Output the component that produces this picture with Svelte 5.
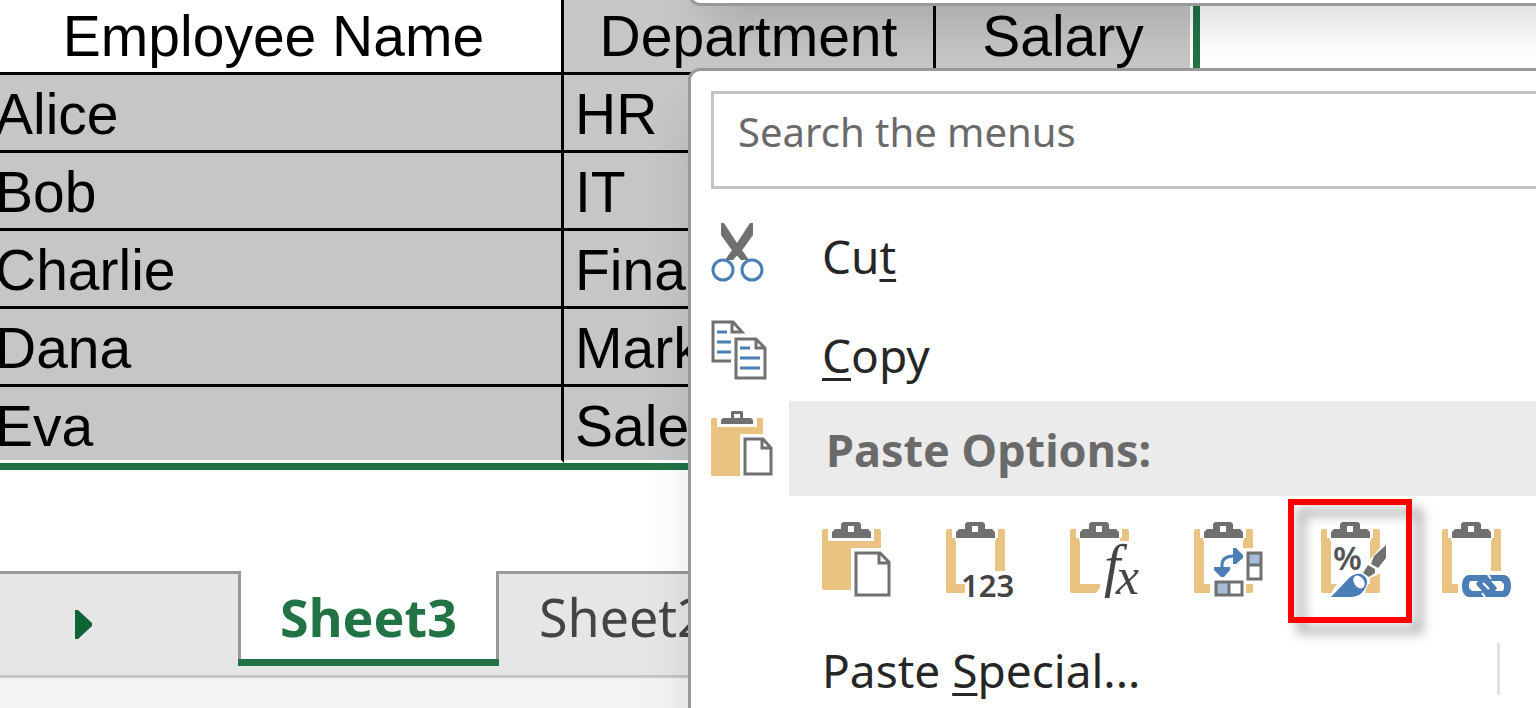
<script>
  const rows = [
    ['Alice', 'HR', ''],
    ['Bob', 'IT', ''],
    ['Charlie', 'Finance', ''],
    ['Dana', 'Marketing', ''],
    ['Eva', 'Sales', '']
  ];

  // right and bottom edges of the board frame differ where a badge covers it
  const options = [
    { id: 'paste', label: 'Paste' },
    { id: 'values', label: 'Values', frame: 'M1 7H10V62H19V71H1L0 69V9ZM49 7H58L59 9V49H49Z' },
    { id: 'formulas', label: 'Formulas', frame: 'M1 7H10V62H30V66L26 71H1L0 69V9ZM49 7H58L59 9V19H49Z' },
    { id: 'transpose', label: 'Transpose', frame: 'M1 7H10V62H16V71H1L0 69V9ZM49 7H58L59 9V26H49ZM52 62H59V69L58 71H52Z' },
    { id: 'formatting', label: 'Formatting', frame: 'M1 7H10V62H16L10 71H1L0 69V9ZM49 7H58L59 9V26L49 37ZM54 54L59 51V69L58 71H44L47 62H49V56Z' },
    { id: 'link', label: 'Paste Link', frame: 'M1 7H10V62H16V71H1L0 69V9ZM49 7H58L59 9V49H49Z' }
  ];
</script>

<main>
  <table>
    <colgroup><col class="c1" /><col class="c2" /><col class="c3" /></colgroup>
    <thead>
      <tr><th class="active">Employee Name</th><th>Department</th><th>Salary</th></tr>
    </thead>
    <tbody>
      {#each rows as row}
        <tr>{#each row as cell}<td>{cell}</td>{/each}</tr>
      {/each}
    </tbody>
  </table>

  <nav class="tabs" aria-label="Sheets">
    <button class="scroll" aria-label="Next sheet">
      <svg width="17" height="29" viewBox="0 0 17 29"><path d="M0 0H3L17 13V16L3 29H0Z" fill="#0e6434" /></svg>
    </button>
    <button class="tab current">Sheet3</button>
    <button class="tab">Sheet2</button>
  </nav>
  <div class="status"></div>

  <div class="toolbar"></div>

  <div class="menu">
    <input type="text" placeholder="Search the menus" aria-label="Search the menus" />

    <button class="item">
      <svg width="54" height="60" viewBox="0 0 54 60">
        <g fill="#707070">
          <path d="M10 0H13L26 20L38 37H30L20 26L10 12Z" />
          <path d="M42 0H39L26 20L14 37H22L32 26L42 12Z" />
        </g>
        <g fill="none" stroke="#4a7eb5" stroke-width="3">
          <circle cx="12" cy="47" r="10" /><circle cx="41" cy="47" r="10" />
        </g>
      </svg>
      <span>Cu<u>t</u></span>
    </button>

    <button class="item">
      <svg width="56" height="64" viewBox="0 0 56 64" fill="none" stroke-width="3">
        <g stroke="#707070">
          <path d="M20 41H2V2H22L31 12H21V2" />
          <path d="M25 19H45L54 28V58H25ZM45 19V28H54" />
        </g>
        <path stroke="#4a7eb5" d="M6 12H16M6 22H20M6 32H20M29 28H39M29 38H49M29 48H49" />
      </svg>
      <span><u>C</u>opy</span>
    </button>

    <div class="item heading">
      <svg width="62" height="66" viewBox="0 0 62 66">
        <path fill="#eac282" d="M1 7H6V16H46V7H51L52 8V23H29V65H1L0 64V8Z" />
        <path fill="#707070" fill-rule="evenodd" d="M20 7V1L21 0H31L32 1V7H40L42 9V13H10V9L12 7ZM23 3V7H29V3Z" />
        <path fill="#fff" stroke="#707070" stroke-width="3" d="M34 28H52L60 37V63H34ZM51 28V37H60" />
      </svg>
      <span>Paste Options:</span>
    </div>

    <div class="options">
      {#each options as option}
        <button class="option" class:marked={option.id === 'formatting'} aria-label={option.label}>
          <svg width="72" height="78" viewBox="0 0 72 78">
            {#if option.id === 'paste'}
              <path fill="#eac282" d="M1 7H6V19H52V7H58L59 9V26H29V68H1L0 66V9Z" />
            {:else}
              <path fill="#eac282" d={option.frame} />
              <path fill="#fff" d="M6 6H52V16H6Z" />
            {/if}
            <path fill="#fff" d="M9 16H50V19H9Z" />
            <path fill="#707070" fill-rule="evenodd" d="M19 7V2L21 0H37L39 2V7H46L49 10V16H10V10L13 7ZM26 4V10H32V4Z" />

            {#if option.id === 'paste'}
              <path fill="none" stroke="#707070" stroke-width="3" d="M34 31H58L67 40V73H34ZM57 31V41H67" />
            {:else if option.id === 'values'}
              <text x="15" y="75" class="digits">123</text>
            {:else if option.id === 'formulas'}
              <text x="34" y="63" class="fx f">f</text>
              <text x="46" y="72" class="fx x">x</text>
            {:else if option.id === 'transpose'}
              <path fill="#a5bdd8" d="M54 31H67V43H54ZM22 60H35V73H22Z" />
              <path fill="none" stroke="#707070" stroke-width="3" d="M54 31H67V57H54ZM54 43H67M22 60H48V73H22ZM35 60V73" />
              <path fill="none" stroke="#4a7eb5" stroke-width="3" d="M28 48V43Q28 34 40 34" />
              <path fill="#4a7eb5" d="M39 26H42L49 33V36L42 42H39ZM20 45H36V48L30 55H27L20 48Z" />
            {:else if option.id === 'formatting'}
              <text x="12" y="48" class="percent">%</text>
              <path fill="#707070" d="M65 23V36L57 46L50 42L53 34ZM47 43L54 47V51L48 55L42 51Z" />
              <path fill="#4a7eb5" d="M10 75L28 56Q34 51 40 52Q47 55 46 62Q44 69 38 73Q34 75 30 75Z" />
              <ellipse fill="#fff" cx="38" cy="60" rx="7" ry="5" transform="rotate(55 38 60)" />
            {:else}
              <path fill="#4a7eb5" d="M26 53H63Q69 55 69 64Q69 73 63 75H26Q20 73 20 64Q20 55 26 53Z" />
              <path fill="#fff" d="M28 59H36L34 62L40 69H30L27 66V62ZM61 69H53L55 66L49 59H59L62 62V66Z" />
              <path fill="none" stroke="#fff" stroke-width="2" d="M46 53L49 57M40 71L43 75M41 61L47 67" />
            {/if}
          </svg>
        </button>
      {/each}
    </div>

    <div class="special">
      <button class="item"><span>Paste <u>S</u>pecial...</span></button>
      <i class="divider"></i>
    </div>
  </div>
</main>

<style>
  :global(body) { background: #fff; overflow: hidden; }
  main {
    position: relative;
    display: flex;
    flex-direction: column;
    height: 100vh;
    overflow: hidden;
    font-family: 'Noto Sans', 'Open Sans', sans-serif;
  }
  button { border: 0; background: none; font: inherit; color: inherit; padding: 0; text-align: left; }
  svg { display: block; flex: none; }

  table {
    flex: none;
    align-self: flex-start;
    table-layout: fixed;
    width: 1214px;
    margin: -3px 0 101px -14px;
    border-collapse: separate;
    border-spacing: 0;
    border-right: 7px solid #217346;
    border-bottom: 7px solid #217346;
    font: 57px/71px 'Liberation Sans', Arial, sans-serif;
    color: #000;
  }
  .c1 { width: 578px; }
  .c2 { width: 372px; }
  .c3 { width: 257px; }
  th, td {
    height: 71px;
    padding: 4px 11px 0;
    border-right: 3px solid #000;
    border-bottom: 3px solid #000;
    background: #c6c6c6;
    font-weight: 400;
    text-align: left;
    white-space: nowrap;
    overflow: hidden;
  }
  td:first-child { padding-left: 9px; }
  th { text-align: center; }
  th.active { background: #fff; }
  th:last-child, td:last-child { border-right-color: #fff; }
  tbody tr:last-child td { height: 67px; padding-top: 6px; border-bottom-color: #fff; line-height: 67px; }

  .tabs { display: flex; align-items: flex-start; flex: none; height: 104px; background: #e6e6e6; border-bottom: 3px solid #c6c6c6; }
  .scroll, .tab { box-sizing: border-box; height: 95px; border-top: 3px solid #999; }
  .scroll { width: 238px; padding: 9px 0 0 75px; }
  .tab {
    flex: 1;
    padding: 0 0 6px 40px;
    font-size: 52px;
    line-height: 70px;
    color: #444;
  }
  .tab.current {
    position: relative;
    flex: none;
    width: 261px;
    padding: 0 0 4px;
    border: 3px solid #999;
    border-width: 0 3px;
    background: #fff;
    color: #217346;
    font-weight: 700;
    text-align: center;
  }
  .tab.current::after {
    content: '';
    position: absolute;
    inset: auto -3px 0;
    height: 7px;
    background: #217346;
  }
  .status { flex: 1; background: #f3f3f3; }

  .toolbar, .menu { position: absolute; left: 688px; right: -12px; background: #fff; border: 3px solid #999; }
  .toolbar { top: -120px; right: -120px; height: 120px; border-radius: 12px; box-shadow: 20px 20px 48px rgba(0, 0, 0, 0.14); }
  .menu { top: 68px; padding: 20px 0; border-radius: 12px 0 0 0; box-shadow: 0 48px 48px rgba(0, 0, 0, 0.1); color: #262626; }

  input {
    display: block;
    box-sizing: border-box;
    width: calc(100% - 20px);
    height: 98px;
    margin: 0 0 14px 20px;
    padding: 0 24px 18px;
    border: 3px solid #c6c6c6;
    background: #fff;
    font: 40px 'Noto Sans', 'Open Sans', sans-serif;
  }
  input::placeholder { color: #6a6a6a; opacity: 1; }

  .item { display: flex; align-items: center; width: 100%; height: 99px; padding-left: 20px; font-size: 46px; line-height: 66px; }
  .item svg { margin-right: auto; }
  .item span { width: calc(100% - 111px); padding-top: 6px; }
  u { text-decoration-thickness: 3px; text-underline-offset: 5px; text-decoration-skip-ink: none; }

  .heading { box-sizing: border-box; height: 95px; background: linear-gradient(#ebebeb, #ebebeb) 98px 0 no-repeat; color: #6a6a6a; font-size: 45px; font-weight: 700; }
  .heading svg { margin-bottom: 10px; }
  .heading span { width: calc(100% - 115px); padding-top: 2px; }

  .options { display: flex; padding: 3px 0 0 98px; }
  .option { position: relative; flex: none; width: 124px; height: 124px; padding-left: 33px; }
  .option.marked::after {
    content: '';
    position: absolute;
    inset: 0 -3px 0 3px;
    border: 6px solid #f00;
    filter: drop-shadow(10px 10px 6px rgba(0, 0, 0, 0.4));
  }
  .option.marked { padding-left: 36px; }
  .digits { font: 600 31px 'Noto Sans', sans-serif; fill: #444; }
  .percent { font: 600 33px 'Noto Sans', sans-serif; fill: #555; }
  .fx { font-family: 'Liberation Serif', serif; font-style: italic; fill: #444; }
  .f { font-size: 59px; }
  .x { font-size: 52px; }

  .special { display: flex; align-items: center; height: 92px; }
  .special .item { width: 806px; padding-left: 131px; }
  .special .item span { width: auto; padding-top: 2px; }
  .divider { width: 3px; height: 52px; background: #e1e1e1; }
</style>
